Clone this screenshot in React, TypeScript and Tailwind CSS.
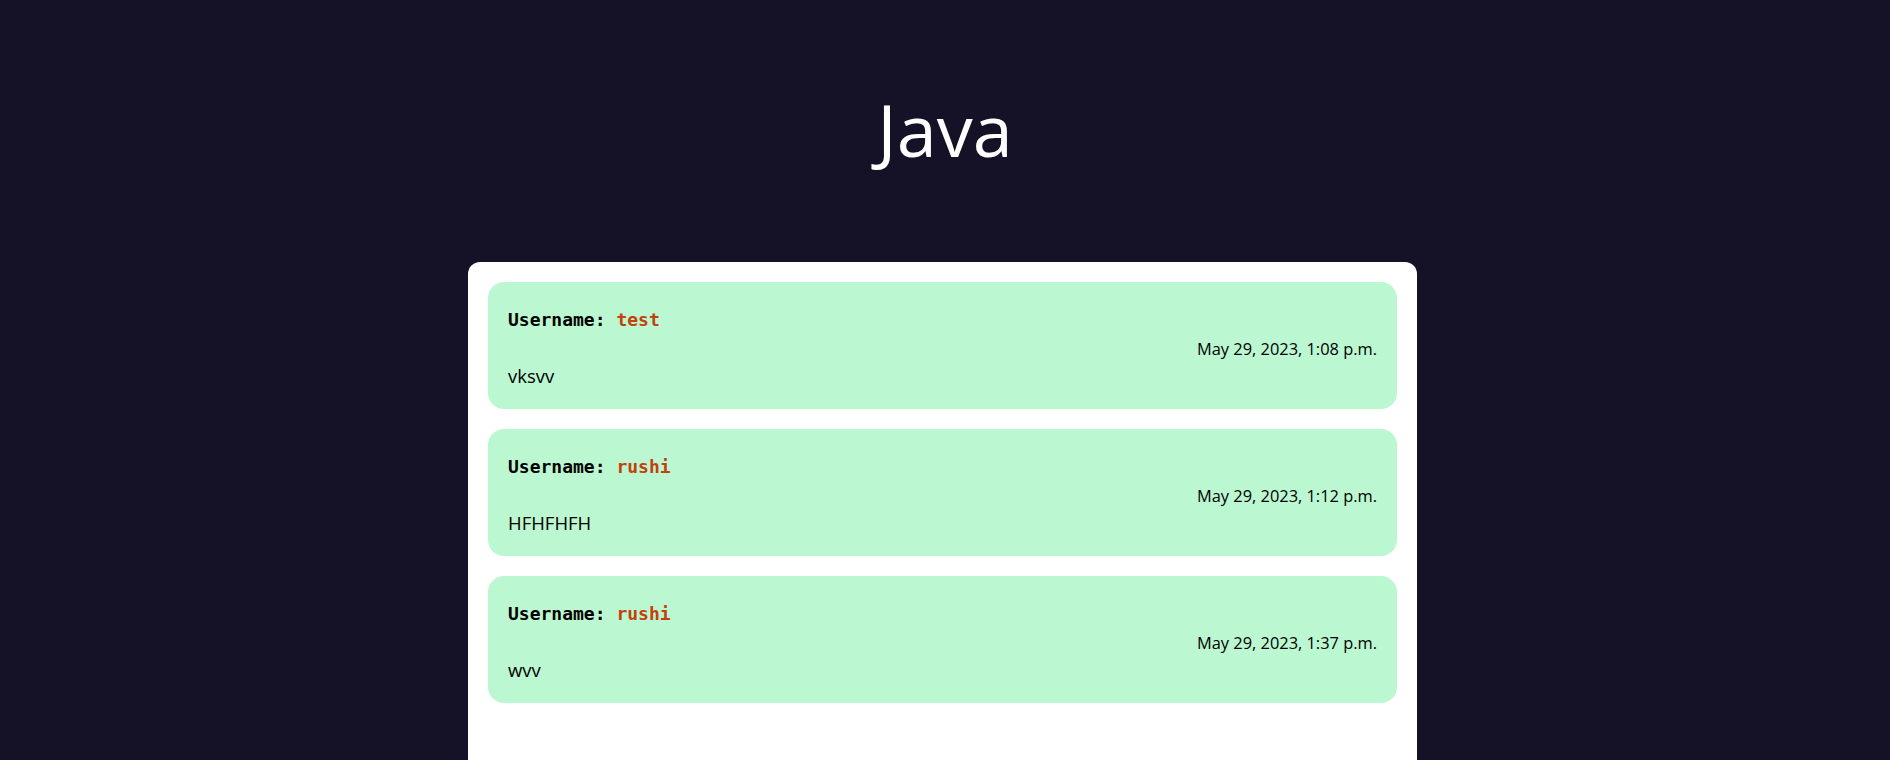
import React from "react";

interface Post {
  id: number;
  username: string;
  date: string;
  message: string;
}

const posts: Post[] = [
  { id: 1, username: "test", date: "May 29, 2023, 1:08 p.m.", message: "vksvv" },
  { id: 2, username: "rushi", date: "May 29, 2023, 1:12 p.m.", message: "HFHFHFH" },
  { id: 3, username: "rushi", date: "May 29, 2023, 1:37 p.m.", message: "wvv" },
];

export default function App() {
  return (
    <div className="min-h-screen h-[760px] overflow-hidden bg-[#151228] font-['Open_Sans','Noto_Sans',sans-serif]">
      <h1 className="pt-[78px] pb-[81px] text-center text-[72px] leading-[103px] text-white">
        Java
      </h1>

      <div className="ml-[calc(50%-477px)] w-[949px] rounded-t-[12px] bg-white p-[20px] pb-[80px]">
        <div className="flex flex-col gap-[20px]">
          {posts.map((post) => (
            <div key={post.id} className="rounded-[16px] bg-[#bbf7d0] px-[20px] pt-[21px] pb-[19px] text-black">
              <div className="font-['DejaVu_Sans_Mono',monospace] text-[18px] font-bold leading-[33px]">
                Username: <span className="text-[#c2410c]">{post.username}</span>
              </div>
              <div className="text-right text-[16.4px] leading-[26px]">{post.date}</div>
              <div className="text-[18.5px] leading-[28px]">{post.message}</div>
            </div>
          ))}
        </div>
      </div>
    </div>
  );
}
